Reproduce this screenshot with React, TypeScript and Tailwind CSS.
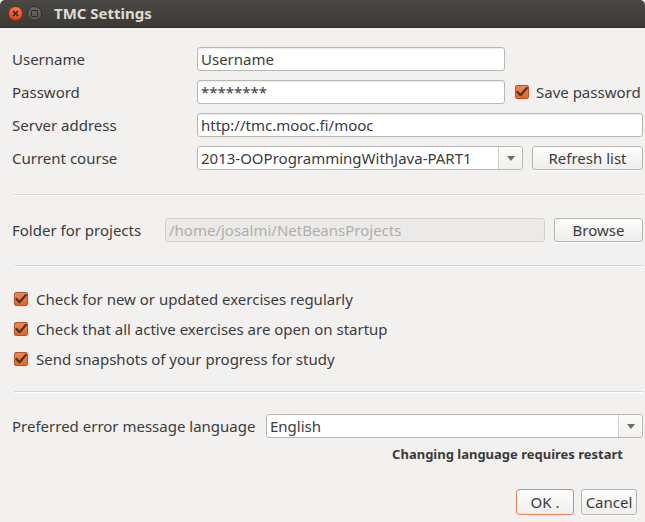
import { useState } from 'react';

const FONT = "font-['Noto_Sans',_'DejaVu_Sans',_sans-serif]";

function TextInput({ value, className = '', disabled = false }: { value: string; className?: string; disabled?: boolean }) {
    return (
        <div
            className={`h-[24px] flex items-center px-[3px] rounded-[3px] border ${disabled
                ? 'bg-[#ebeae8] border-[#d2d0cc] text-[#b0aeaa]'
                : 'bg-white border-[#bab8b3] text-[#3c3c3c] shadow-[inset_0_1px_1px_rgba(0,0,0,0.08)]'
                } ${className}`}
        >
            <span className="truncate">{value}</span>
        </div>
    );
}

function Combo({ value, className = '' }: { value: string; className?: string }) {
    return (
        <div className={`h-[24px] flex rounded-[3px] border border-[#bab8b3] bg-white text-[#3c3c3c] ${className}`}>
            <div className="flex-1 flex items-center px-[3px] truncate">{value}</div>
            <div className="w-[24px] border-l border-[#d0cec9] flex items-center justify-center bg-gradient-to-b from-[#fbfbfa] to-[#f1f0ef] rounded-r-[3px]">
                <svg width="8" height="5" viewBox="0 0 8 5">
                    <path d="M0 0 L8 0 L4 5 Z" fill="#6d6b66" />
                </svg>
            </div>
        </div>
    );
}

function Button({ label, className = '', focused = false }: { label: string; className?: string; focused?: boolean }) {
    return (
        <div
            className={`flex items-center justify-center rounded-[3px] border bg-gradient-to-b from-[#fdfdfd] to-[#efeeec] text-[#3c3c3c] shadow-[0_1px_0_rgba(255,255,255,0.8)] ${focused ? 'border-[#e9845a]' : 'border-[#b7b5b0]'
                } ${className}`}
        >
            {label}
        </div>
    );
}

function CheckBox({ checked, onToggle }: { checked: boolean; onToggle: () => void }) {
    return (
        <div
            onClick={onToggle}
            className={`w-[14px] h-[14px] rounded-[2px] border flex items-center justify-center ${checked
                ? 'bg-gradient-to-b from-[#f2864d] to-[#e1652c] border-[#b8532a]'
                : 'bg-white border-[#a9a7a2]'
                }`}
        >
            {checked && (
                <svg width="12" height="10" viewBox="0 0 12 10">
                    <path d="M1.5 5 L4.5 8.2 L10.8 1" stroke="#4a3228" strokeWidth="2.2" fill="none" strokeLinecap="round" strokeLinejoin="round" />
                </svg>
            )}
        </div>
    );
}

function Separator() {
    return <div className="ml-[2px] h-[2px] border-t border-[#d8d6d2] border-b border-b-white" />;
}

export default function App() {
    const [savePassword, setSavePassword] = useState(true);
    const [checks, setChecks] = useState([true, true, true]);

    const toggle = (i: number) => setChecks(c => c.map((v, j) => (j === i ? !v : v)));

    const options = [
        'Check for new or updated exercises regularly',
        'Check that all active exercises are open on startup',
        'Send snapshots of your progress for study',
    ];

    return (
        <div className={`w-[645px] h-[522px] overflow-hidden bg-[#f2f1f0] text-[15px] text-[#3c3c3c] ${FONT}`}>
            {/* Title bar */}
            <div className="h-[28px] flex items-center bg-gradient-to-b from-[#4a4945] to-[#3b3a36] rounded-t-[5px] border-b border-[#2f2e2b]">
                <div className="ml-[8px] w-[15px] h-[15px] rounded-full bg-gradient-to-b from-[#f37a4e] to-[#d9431b] border border-[#8e2a10] flex items-center justify-center">
                    <svg width="7" height="7" viewBox="0 0 7 7">
                        <path d="M1 1 L6 6 M6 1 L1 6" stroke="#3a1a10" strokeWidth="1.4" />
                    </svg>
                </div>
                <div className="ml-[4px] w-[15px] h-[15px] rounded-full bg-gradient-to-b from-[#6a6864] to-[#545350] border border-[#302f2c] flex items-center justify-center">
                    <div className="w-[7px] h-[7px] border-[1.5px] border-[#2d2c29] rounded-[1px]" />
                </div>
                <div className="ml-[12px] font-bold text-[15px] text-[#dfdbd2]">TMC Settings</div>
            </div>

            <div className="pl-[12px] pr-[2px] pt-[19px]">
                {/* Account */}
                <div className="flex flex-col gap-[9px]">
                    <div className="flex items-center h-[24px]">
                        <div className="w-[185px]">Username</div>
                        <TextInput value="Username" className="w-[308px]" />
                    </div>
                    <div className="flex items-center h-[24px]">
                        <div className="w-[185px]">Password</div>
                        <TextInput value="********" className="w-[308px]" />
                        <div className="ml-[10px]">
                            <CheckBox checked={savePassword} onToggle={() => setSavePassword(!savePassword)} />
                        </div>
                        <div className="ml-[7px] whitespace-nowrap">Save password</div>
                    </div>
                    <div className="flex items-center h-[24px]">
                        <div className="w-[185px]">Server address</div>
                        <TextInput value="http://tmc.mooc.fi/mooc" className="flex-1" />
                    </div>
                    <div className="flex items-center h-[24px]">
                        <div className="w-[185px]">Current course</div>
                        <Combo value="2013-OOProgrammingWithJava-PART1" className="w-[326px]" />
                        <Button label="Refresh list" className="ml-[9px] flex-1 h-[24px]" />
                    </div>
                </div>

                <div className="mt-[24px]">
                    <Separator />
                </div>

                {/* Folder */}
                <div className="mt-[22px] flex items-center h-[24px]">
                    <div className="w-[153px] whitespace-nowrap">Folder for projects</div>
                    <TextInput value="/home/josalmi/NetBeansProjects" disabled className="w-[380px]" />
                    <Button label="Browse" className="ml-[9px] flex-1 h-[24px]" />
                </div>

                <div className="mt-[23px]">
                    <Separator />
                </div>

                {/* Options */}
                <div className="mt-[22px] flex flex-col gap-[10px]">
                    {options.map((label, i) => (
                        <div key={label} className="flex items-center h-[20px]">
                            <div className="ml-[2px]">
                                <CheckBox checked={checks[i]} onToggle={() => toggle(i)} />
                            </div>
                            <div className="ml-[8px]">{label}</div>
                        </div>
                    ))}
                </div>

                <div className="mt-[22px]">
                    <Separator />
                </div>

                {/* Language */}
                <div className="mt-[21px] flex items-center h-[24px]">
                    <div className="w-[254px] whitespace-nowrap">Preferred error message language</div>
                    <Combo value="English" className="flex-1" />
                </div>
                <div className="mt-[7px] flex justify-end pr-[20px] h-[20px] items-center font-bold text-[13px] text-[#3a3a3a]">
                    Changing language requires restart
                </div>

                {/* Buttons */}
                <div className="mt-[24px] flex justify-end gap-[7px] pr-[6px]">
                    <Button label="OK ." focused className="w-[58px] h-[26px]" />
                    <Button label="Cancel" className="w-[56px] h-[26px]" />
                </div>
            </div>
        </div>
    );
}
